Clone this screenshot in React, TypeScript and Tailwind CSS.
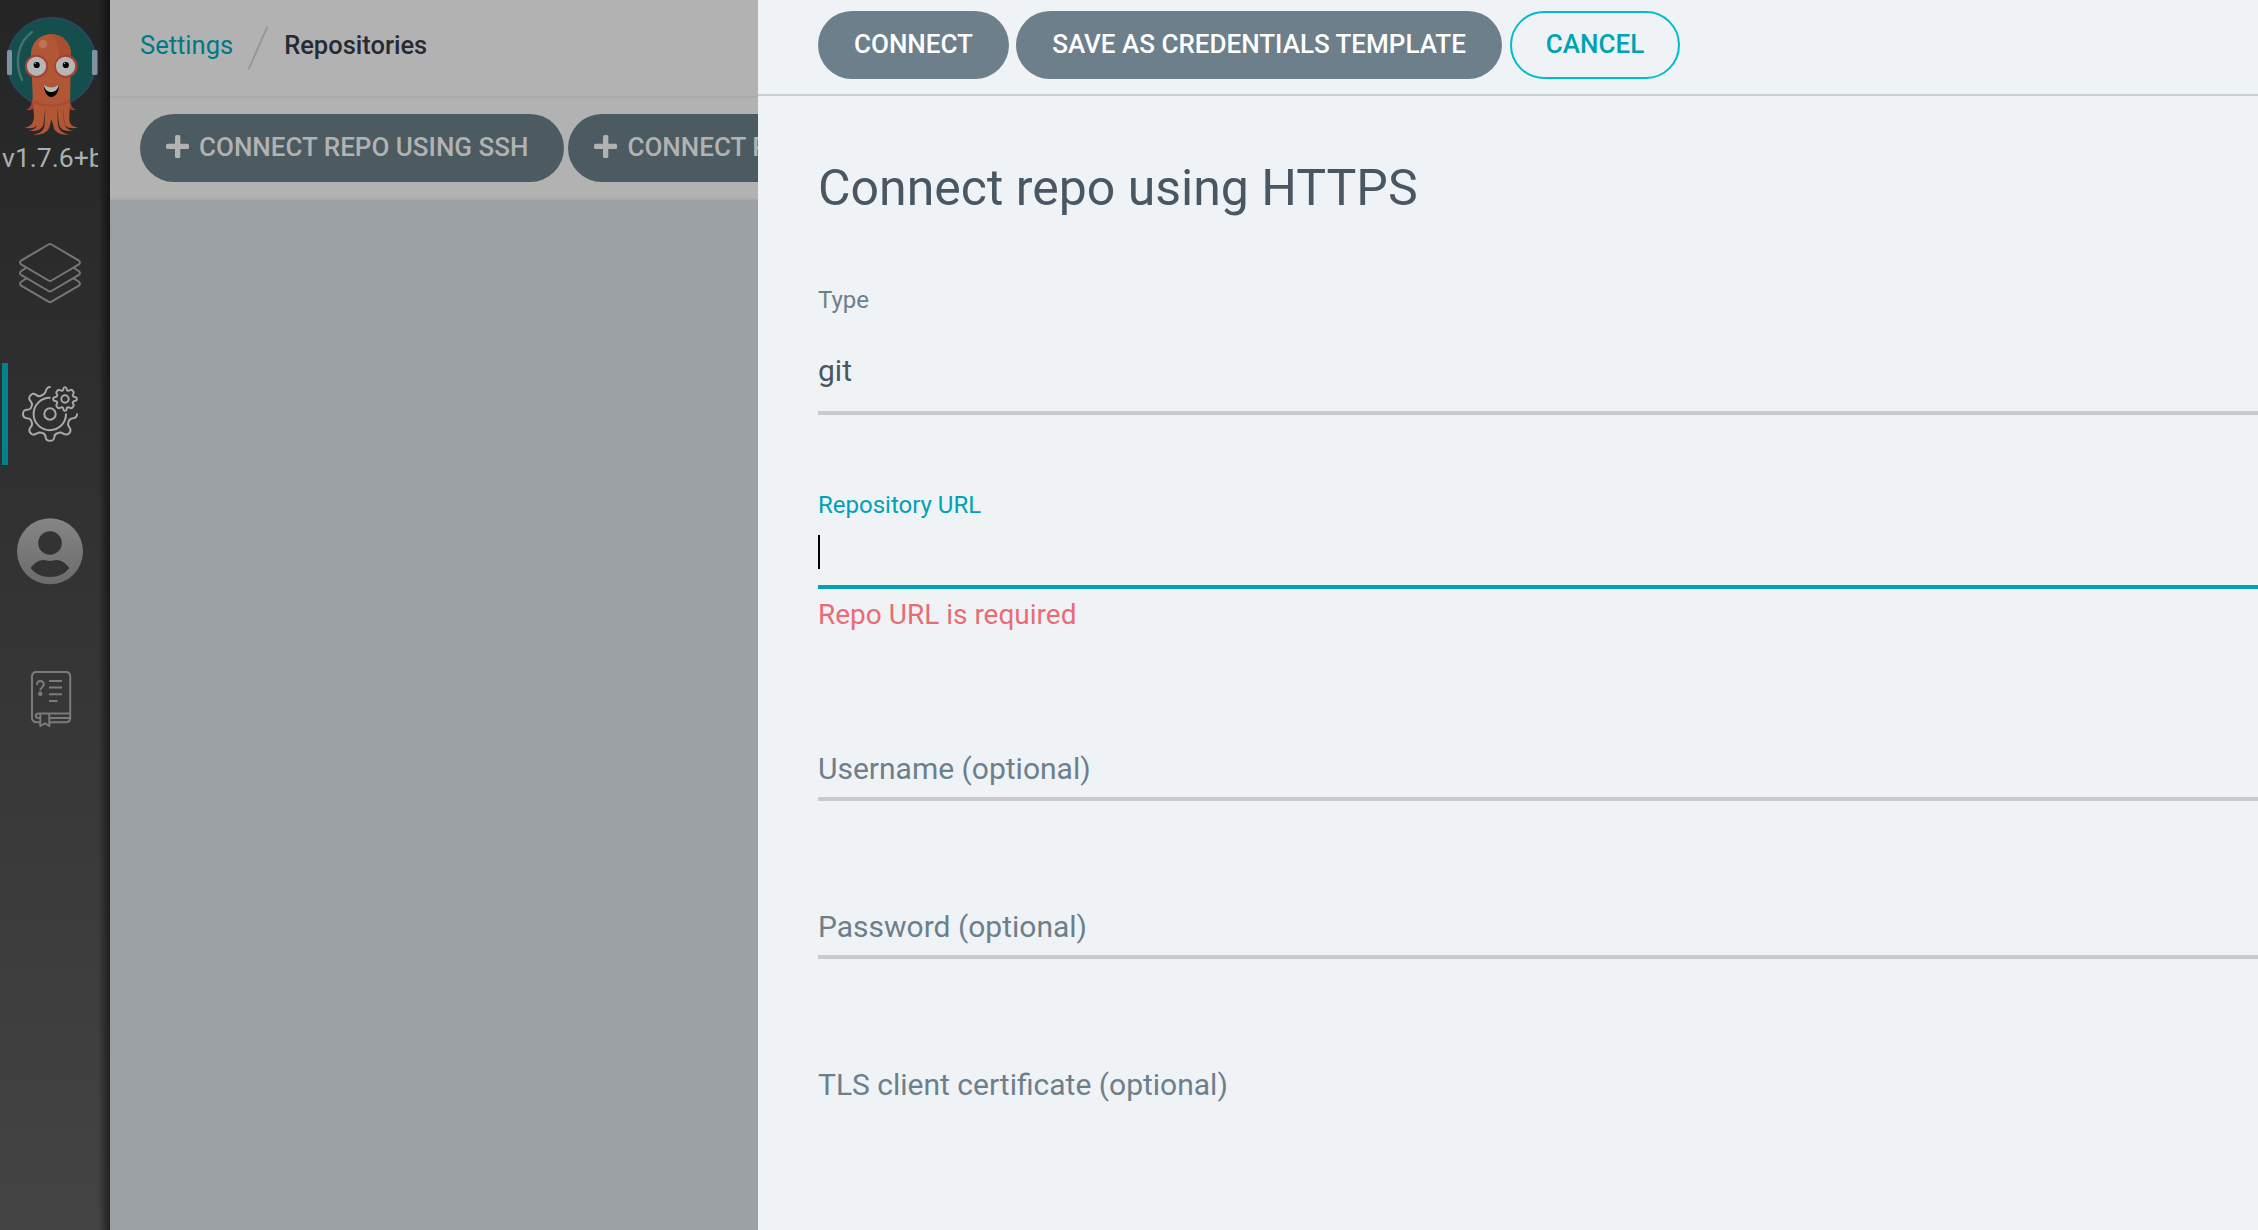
import React from "react";

function ArgoLogo() {
  return (
    <svg width="110" height="142" viewBox="0 0 110 142" className="block">
      <circle cx="51.5" cy="62" r="44" fill="#144f4e" stroke="#27495a" strokeWidth="2" />
      <rect x="7" y="50" width="5" height="25" rx="1.5" fill="#7d92a3" />
      <rect x="92" y="50" width="5.5" height="25" rx="1.5" fill="#7d92a3" />
      <path d="M32 32C18 42 14 62 22 80" fill="none" stroke="#47706e" strokeWidth="2.4" strokeLinecap="round" />
      <path d="M32 100C31 106 29.500 109 26 109.500C29 111 33 110 35 107ZM70 100C71 106 72.500 109 76.500 109.500C73 111 70 110 68 107Z" fill="#a13c33" />
      <path
        d="M31 54a20 20 0 0 1 40 0L70 104L69.300 117C69 124 71.500 126.500 78 127.500C72 129 66 128 64.500 124L63 106L64 122C65 128 68 130 73 130.500C66 132 60 130 59 124L57 107L58 125C59 130 62 133.500 69 134.500C60 135.500 54 132 53.500 126L51.300 119L49.500 127C48 132 42 135.500 33.500 134.500C41 133.500 44 130 44.500 125L45.500 107L43.500 124C42 130 36 132 28.500 130.500C34 130 37 128 38 122L39.500 106L38 124C36 128 30 129 24.500 127.500C30 127 33.500 124 34 117L33 104Z"
        fill="#b15736"
      />
      <path d="M51 34a20 20 0 0 1 20 20V68H58C59 50 60 43 51 34Z" fill="#a74f30" />
      <path d="M32 99Q51 110 70 99V103Q51 110 32 103Z" fill="#aa4c33" />
      <circle cx="43" cy="44" r="4.300" fill="#bd7458" />
      <circle cx="36.500" cy="66.300" r="11.600" fill="#a73f32" />
      <circle cx="66" cy="66.300" r="11.600" fill="#a73f32" />
      <circle cx="36.500" cy="66.300" r="9.600" fill="#b6b6b6" />
      <circle cx="65.500" cy="66.300" r="9.600" fill="#b6b6b6" />
      <circle cx="36.700" cy="65" r="3.100" fill="#000" />
      <circle cx="65.800" cy="65" r="3.100" fill="#000" />
      <circle cx="35.500" cy="63.500" r="0.700" fill="#aaa" />
      <circle cx="64.600" cy="63.500" r="0.700" fill="#aaa" />
      <path d="M43.800 84.500Q51 90 59 84.500C59 92 55.500 97 51.300 97S44 92 43.800 84.500Z" fill="#000" />
      <path d="M43.800 84.500Q51 90 59 84.500C58 89.500 55 92 51.300 92S44.500 89.500 43.800 84.500Z" fill="#b6b6b6" />
    </svg>
  );
}

function LayersIcon() {
  return (
    <svg width="64" height="64" viewBox="18 241 64 64" fill="none" stroke="#777" strokeWidth="2" strokeLinejoin="round" strokeLinecap="round">
      <path d="M48.500 244.500Q50 243.600 51.500 244.500L78.500 260.300Q81.500 262.500 78.500 264.700L51.500 280.500Q50 281.400 48.500 280.500L21.500 264.700Q18.500 262.500 21.500 260.300Z" />
      <path d="M26 268L21.500 270.800Q18.500 273 21.500 275.200L48.500 291Q50 291.900 51.500 291L78.500 275.200Q81.500 273 78.500 270.800L74 268" />
      <path d="M26 278.700L21.500 281.500Q18.500 283.700 21.500 285.900L48.500 301.700Q50 302.600 51.500 301.700L78.500 285.900Q81.500 283.700 78.500 281.500L74 278.700" />
    </svg>
  );
}

function GearsIcon() {
  return (
    <svg width="60" height="60" viewBox="20 385 60 60" fill="none" stroke="#a9a9a9" strokeWidth="2" strokeLinecap="round" strokeLinejoin="round">
      <circle cx="50" cy="415" r="5.700" />
      <path d="M49.700 398.800A16.200 16.200 0 1 0 66 415.200" />
      <path d="M50 388C46.500 388 46.300 390.500 45.500 393C44.500 396 42 396.200 39.500 397.200C36.500 397.500 35.300 394 32.500 394.800C30 396 28 399 30 401.500C31.500 403.500 32.800 404.500 31.800 406.500C31 409 30.500 410.700 27 410.800C23.500 411.200 23 412.500 23 415C23 418 24 419 27 419.200C30.500 419.300 31 421 31.800 423.500C33 426 31.500 427 30 429C28.500 431.500 29.800 433.500 31.500 435C33.500 436.200 35 435.800 37 434.300C39 433 40.500 433.300 42.500 434C45 434.800 45.600 436 45.700 438.500C46 441.500 47.500 441.800 50 441.800C53 441.800 54 441 54.300 438C54.400 435.500 55.500 434.700 58 434C60 433 61.500 433.300 63.300 434.700C65.500 436 67 436 69 434.500C71 432.300 71 430.500 69.500 428.500C68 426.700 67.200 426 68.200 423.500C69 421 70 419.500 73 419.300C76 419 77 418 77 415.300" />
      <circle cx="65" cy="400" r="3.700" />
      <path d="M63 391.200C63.800 388 63.500 388.200 65 388.200S66.200 388 67 391.200Q68 392.500 70.300 391C71.500 390.300 74.500 392.500 73.500 394.500C72.200 396.200 72.600 397.500 74.500 398C76.800 398.200 76.800 398.500 76.800 400S76.800 401.800 74.500 402C72.600 402.500 72.200 403.800 73.500 405.500C74.500 407.500 71.500 409.700 70.300 409Q68 407.500 67 408.800C66.200 412 66.500 411.800 65 411.800S63.800 412 63 408.800Q62 407.500 59.700 409C58.500 409.700 55.500 407.500 56.500 405.500C57.800 403.800 57.400 402.500 55.500 402C53.200 401.800 53.200 401.500 53.200 400S53.200 398.200 55.500 398C57.400 397.500 57.800 396.200 56.500 394.500C55.500 392.500 58.500 390.300 59.700 391Q62 392.500 63 391.200Z" />
    </svg>
  );
}

function UserIcon() {
  return (
    <svg width="66" height="67" viewBox="17 518 66 67">
      <defs>
        <linearGradient id="avatar" x1="0" y1="0" x2="0" y2="1">
          <stop offset="0" stopColor="#858585" />
          <stop offset="1" stopColor="#6c6c6c" />
        </linearGradient>
      </defs>
      <circle cx="50" cy="551.300" r="33" fill="url(#avatar)" />
      <circle cx="50" cy="543" r="11.800" fill="#333" />
      <path d="M30.700 568C34 563 39 560 43.500 560C46 560 47 561 50 561S54 560 56.500 560C61 560 66 563 69.300 568C65 574 58 577 50 577S35 574 30.700 568Z" fill="#333" />
    </svg>
  );
}

function DocsIcon() {
  return (
    <svg width="42" height="58" viewBox="30 670 42 58" fill="none" stroke="#7b7b7b" strokeWidth="2">
      <path d="M40 722.300H37Q32 722.300 32 717.500V676.500Q32 672 36.500 672H66Q70.200 672 70.200 676.500V718Q70.200 722.300 66 722.300H50" />
      <path d="M70 713.500H38.500Q35.800 713.500 35.800 715.700T38.500 718H40M50 718H70" />
      <path d="M40.300 713.500V726L45 723.300L49.300 726V713.500" strokeLinejoin="round" />
      <path d="M49 681H62M49 687.500H62M49 694.200H62M49 701H57.500" />
      <path d="M37 685Q37 681 40.300 681T43.800 684.500C43.800 687.500 40.300 687 40.300 690.500" />
      <circle cx="40.300" cy="693.700" r="1.200" fill="#7b7b7b" />
    </svg>
  );
}

function PlusIcon() {
  return (
    <svg width="23" height="23" viewBox="0 0 23 23" className="relative -top-[2px] shrink-0" fill="#b2b2b2">
      <rect x="9" y="0" width="5.300" height="23" rx="1.500" />
      <rect x="0" y="8.800" width="23" height="5.300" rx="1.500" />
    </svg>
  );
}

function Sidebar() {
  return (
    <aside className="relative flex h-full w-[110px] shrink-0 flex-col bg-linear-to-b from-[#252525] to-[#444]">
      <ArgoLogo />
      <div className="ml-[2px] h-[36px] w-[96px] overflow-hidden text-[26.6px] leading-[32px] whitespace-nowrap text-[#a9b0b3]">v1.7.6+b</div>
      <nav className="flex flex-col">
        <a className="mt-[63px] ml-[18px] h-[64px]"><LayersIcon /></a>
        <a className="mt-[58px] ml-[2px] flex h-[102px] items-center border-l-[6px] border-[#00828f] pl-[12px]"><GearsIcon /></a>
        <a className="mt-[53px] ml-[17px] h-[67px]"><UserIcon /></a>
        <a className="mt-[85px] ml-[30px] h-[58px]"><DocsIcon /></a>
      </nav>
      <div className="absolute top-0 right-0 h-full w-[12px] bg-linear-to-r from-transparent to-black/50" />
    </aside>
  );
}

function RepoButton({ label }: { label: string }) {
  return (
    <button className="flex h-[68px] shrink-0 items-center gap-[10px] rounded-full bg-[#4c5a61] pr-[36px] pl-[26px] text-[26px] font-medium whitespace-nowrap text-[#b2b2b2]">
      <PlusIcon />
      <span className="relative -top-px">{label}</span>
    </button>
  );
}

function Field({ label, className }: { label: string; className: string }) {
  return (
    <div className={"flex items-end border-b-[4px] pb-[10px] text-[30px] leading-[36px] text-[#6d7f8b] " + className}>
      {label}
    </div>
  );
}

function ConnectPanel() {
  return (
    <section className="flex h-full min-w-0 flex-1 flex-col bg-[#eff3f6]">
      <header className="flex h-[96px] shrink-0 items-start border-b-2 border-[#c6cfd0] pt-[11px] pl-[60px] text-[26px] leading-[66px] font-medium whitespace-nowrap">
        <button className="h-[68px] w-[191px] rounded-full bg-[#6d7f8b] pb-[2px] text-white">CONNECT</button>
        <button className="ml-[7px] h-[68px] w-[486px] rounded-full bg-[#6d7f8b] pb-[2px] text-white">SAVE AS CREDENTIALS TEMPLATE</button>
        <button className="ml-[8px] h-[68px] w-[170px] rounded-full border-2 border-[#00bdce] pb-[2px] leading-[62px] text-[#00a2b3]">CANCEL</button>
      </header>
      <div className="flex flex-col pl-[60px]">
        <h1 className="mt-[62px] text-[50px] leading-[60px] text-[#495763]">Connect repo using HTTPS</h1>
        <label className="mt-[68px] text-[24px] leading-[28px] text-[#6d7f8b]">Type</label>
        <div className="mt-[39px] h-[62px] border-b-[4px] border-[#cacaca] text-[30px] leading-[36px] text-[#495763]">git</div>
        <label className="mt-[76px] text-[24px] leading-[28px] text-[#00a2b3]">Repository URL</label>
        <div className="mt-[16px] h-[54px] border-b-[4px] border-[#00a2b3]">
          <div className="h-[34px] w-[2px] bg-black" />
        </div>
        <div className="mt-[9px] text-[28px] leading-[34px] text-[#eb6b75]">Repo URL is required</div>
        <Field label="Username (optional)" className="mt-[119px] h-[50px] border-[#cacaca]" />
        <Field label="Password (optional)" className="mt-[108px] h-[50px] border-[#cacaca]" />
        <Field label="TLS client certificate (optional)" className="mt-[108px] h-[50px] border-transparent" />
      </div>
    </section>
  );
}

export default function App() {
  return (
    <div className="flex h-[1230px] w-[2258px] overflow-hidden font-[Roboto,sans-serif]">
      <Sidebar />
      <main className="flex h-full w-[648px] shrink-0 flex-col overflow-hidden bg-[#9ba0a4]">
        <div className="flex h-[98px] shrink-0 items-center border-b-2 border-[#a6abac] bg-[#b2b2b2] pl-[30px] text-[25.5px] leading-[30px]">
          <span className="relative -top-[3px] text-[#007985]">Settings</span>
          <svg width="22" height="46" viewBox="0 0 22 46" className="ml-[14px] block">
            <path d="M1.500 44.500L20.500 1.500" stroke="#8e979d" strokeWidth="1.800" />
          </svg>
          <span className="relative -top-[3px] ml-[15px] font-medium text-[#252a34]">Repositories</span>
        </div>
        <div className="flex h-[102px] shrink-0 items-start gap-[4px] border-b-2 border-[#a6abac] bg-[#b2b2b2] pt-[16px] pl-[30px]">
          <RepoButton label="CONNECT REPO USING SSH" />
          <RepoButton label="CONNECT REPO USING HTTPS" />
        </div>
      </main>
      <ConnectPanel />
    </div>
  );
}
